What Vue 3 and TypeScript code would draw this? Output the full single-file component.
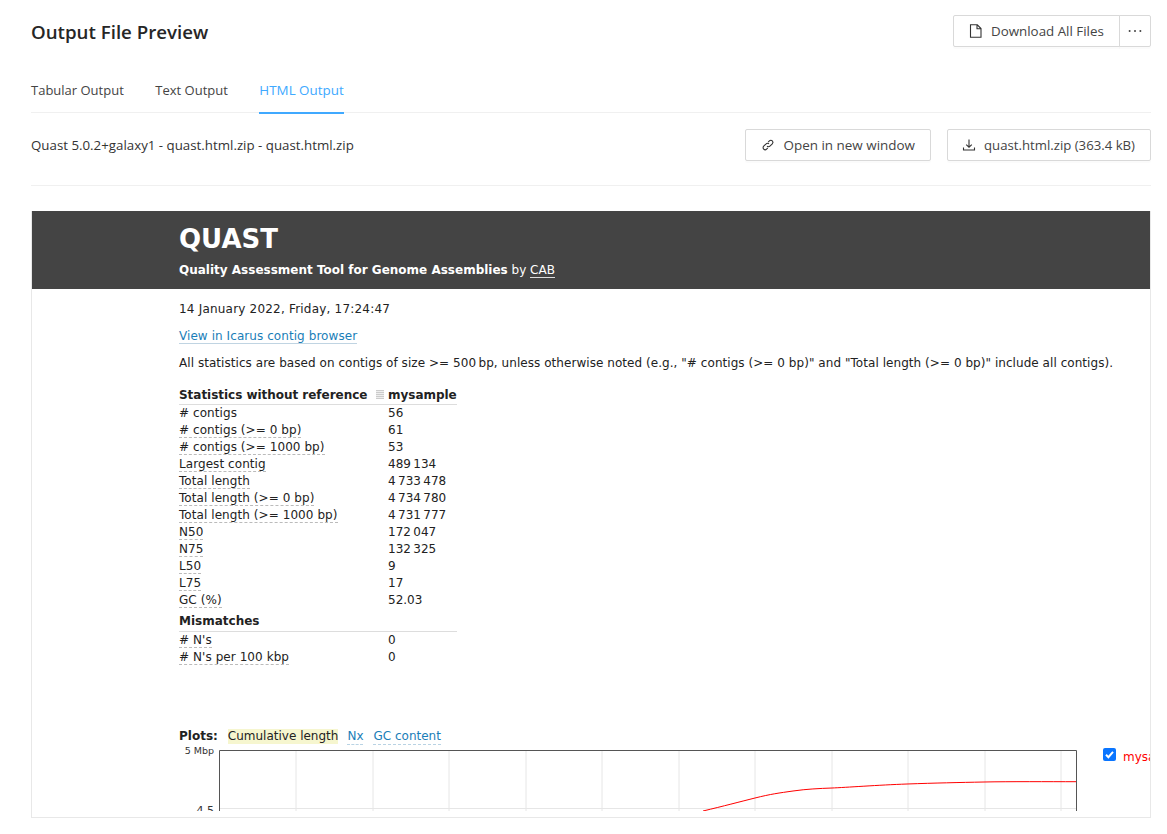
<script setup lang="ts">
interface Metric { label: string; value: string; dashed?: boolean }

const metrics: Metric[] = [
  { label: '# contigs', value: '56' },
  { label: '# contigs (>= 0 bp)', value: '61', dashed: true },
  { label: '# contigs (>= 1000 bp)', value: '53', dashed: true },
  { label: 'Largest contig', value: '489\u2009134', dashed: true },
  { label: 'Total length', value: '4\u2009733\u2009478', dashed: true },
  { label: 'Total length (>= 0 bp)', value: '4\u2009734\u2009780', dashed: true },
  { label: 'Total length (>= 1000 bp)', value: '4\u2009731\u2009777', dashed: true },
  { label: 'N50', value: '172\u2009047', dashed: true },
  { label: 'N75', value: '132\u2009325', dashed: true },
  { label: 'L50', value: '9', dashed: true },
  { label: 'L75', value: '17', dashed: true },
  { label: 'GC (%)', value: '52.03', dashed: true },
]
const mismatches: Metric[] = [
  { label: "# N's", value: '0', dashed: true },
  { label: "# N's per 100 kbp", value: '0', dashed: true },
]
const tabs = ['Tabular Output', 'Text Output', 'HTML Output']
const gridX = [77, 154, 230, 307, 383, 460, 536, 613, 689, 766, 842]
</script>

<template>
  <div class="page">
    <header class="head">
      <h1>Output File Preview</h1>
      <div class="btn-group">
        <button class="btn">
          <svg width="14" height="14" viewBox="0 0 14 14" fill="none" stroke="#333" stroke-width="1.1"><path d="M1.5.8h6.8l3.7 3.7v8.7H1.5zM8 .8v4h4" /></svg>
          Download All Files
        </button>
        <button class="btn more">
          <svg width="14" height="4" viewBox="0 0 14 4" fill="#444"><circle cx="1.6" cy="2" r="1" /><circle cx="7" cy="2" r="1" /><circle cx="12.4" cy="2" r="1" /></svg>
        </button>
      </div>
    </header>

    <nav class="tabs">
      <a v-for="(t, i) in tabs" :key="t" class="tab" :class="{ active: i === 2 }">{{ t }}</a>
    </nav>

    <div class="file-row">
      <span class="file-name">Quast 5.0.2+galaxy1 - quast.html.zip - quast.html.zip</span>
      <div class="file-actions">
        <button class="btn open">
          <svg width="14" height="14" viewBox="0 0 14 14" fill="none" stroke="#333" stroke-width="1.1"><path d="M6 8.2a2 2 0 0 0 2.9 0l2.4-2.4a2 2 0 0 0-2.9-2.9L7.2 4.1M8 5.8a2 2 0 0 0-2.9 0L2.7 8.2a2 2 0 0 0 2.9 2.9l1.2-1.2" /></svg>
          Open in new window
        </button>
        <button class="btn zip">
          <svg width="14" height="14" viewBox="0 0 14 14" fill="none" stroke="#333" stroke-width="1.1"><path d="M7 1.5v7.5M4.2 6.6 7 9.2l2.8-2.6M1.5 9.5v2.5h11V9.5" /></svg>
          quast.html.zip (363.4 kB)
        </button>
      </div>
    </div>

    <section class="frame">
      <div class="report">
        <div class="banner">
          <div class="inner">
            <div class="logo">QUAST</div>
            <div class="subtitle"><b>Quality Assessment Tool for Genome Assemblies</b> by <span class="cab">CAB</span></div>
          </div>
        </div>

        <div class="inner body-text">
          <p class="date">14 January 2022, Friday, 17:24:47</p>
          <p class="icarus"><a>View in Icarus contig browser</a></p>
          <p class="note">All statistics are based on contigs of size &gt;= 500&#8201;bp, unless otherwise noted (e.g., "# contigs (&gt;= 0 bp)" and "Total length (&gt;= 0 bp)" include all contigs).</p>

          <table class="stats">
            <thead>
              <tr>
                <th class="c1">Statistics without reference <i class="drag"></i></th>
                <th>mysample</th>
              </tr>
            </thead>
            <tbody>
              <tr v-for="m in metrics" :key="m.label">
                <td><span class="label" :class="{ dash: m.dashed }">{{ m.label }}</span></td>
                <td>{{ m.value }}</td>
              </tr>
              <tr class="group"><td colspan="2">Mismatches</td></tr>
              <tr v-for="m in mismatches" :key="m.label">
                <td><span class="label dash">{{ m.label }}</span></td>
                <td>{{ m.value }}</td>
              </tr>
            </tbody>
          </table>

          <div class="plots-nav">
            <b>Plots:</b>
            <span class="sel">Cumulative length</span>
            <a>Nx</a>
            <a>GC content</a>
          </div>

          <div class="plot">
            <svg class="chart" width="900" height="64" viewBox="0 0 900 64">
              <text x="35" y="4" text-anchor="end" class="tick">5 Mbp</text>
              <text x="35" y="64" text-anchor="end" class="tick big">4.5</text>
              <line v-for="x in gridX" :key="x" :x1="x + 40" y1="0" :x2="x + 40" y2="64" stroke="#e6e6e6" />
              <line x1="40" y1="58.5" x2="898" y2="58.5" stroke="#e6e6e6" />
              <path d="M40.5 64V.5H897.5V64" fill="none" stroke="#555" />
              <path d="M524 61C545 56 560 52 576 48S600 43 614 41 640 38.500 653 38 700 35 728 34 780 32.500 805 32 870 31.700 897 31.700" fill="none" stroke="#f00" stroke-width="1" />
            </svg>
            <label class="legend">
              <span class="check">
                <svg width="13" height="13" viewBox="0 0 13 13"><path d="M3 6.800 5.400 9.200 10 3.800" fill="none" stroke="#fff" stroke-width="2" /></svg>
              </span>
              <span class="legend-name">mysample</span>
            </label>
          </div>
        </div>
      </div>
    </section>
  </div>
</template>

<style>
html, body { background: #fff; overflow: hidden; }
</style>

<style scoped>
.page {
  width: 1120px;
  height: 834px;
  padding-left: 31px;
  box-sizing: content-box;
  font-family: "Open Sans", "Noto Sans", sans-serif;
  font-size: 13px;
  color: #333;
  overflow: hidden;
}
.head {
  height: 64px;
  box-sizing: border-box;
  padding-top: 15px;
  display: flex;
  justify-content: space-between;
  align-items: flex-start;
}
h1 {
  margin: 0;
  font-size: 18.7px;
  line-height: 34px;
  font-weight: 600;
  color: #262626;
}
.btn-group { display: flex; }
.btn {
  height: 32px;
  padding: 0 15px;
  display: inline-flex;
  align-items: center;
  gap: 8px;
  background: #fff;
  border: 1px solid #d9d9d9;
  border-radius: 2px;
  font-family: inherit;
  font-size: 13.35px;
  color: #444;
  box-shadow: 0 2px 0 rgba(0, 0, 0, 0.015);
}
.btn.open { font-size: 13.45px; }
.btn.zip { font-size: 13.2px; padding-left: 14px; }
.btn-group .btn:first-child { border-radius: 2px 0 0 2px; width: 167px; }
.more {
  margin-left: -1px;
  width: 32px;
  padding: 0;
  justify-content: center;
  border-radius: 0 2px 2px 0;
}
.tabs {
  display: flex;
  gap: 31.5px;
  height: 48px;
  border-bottom: 1px solid #f0f0f0;
}
.tab {
  padding-top: 17px;
  height: 31px;
  line-height: 18px;
  color: #444;
}
.tab.active {
  color: #40a9ff;
  border-bottom: 2px solid #40a9ff;
  font-size: 13.4px;
}
.file-row {
  height: 73px;
  padding-top: 16px;
  display: flex;
  justify-content: space-between;
  align-items: flex-start;
  border-bottom: 1px solid #f0f0f0;
  box-sizing: border-box;
}
.file-name { font-size: 13.3px; line-height: 32px; }
.file-actions { display: flex; gap: 16px; }
.frame {
  margin-top: 25px;
  height: 607px;
  box-sizing: border-box;
  border: 1px solid #e8e8e8;
  border-top: 0;
  padding-bottom: 6px;
}
.report {
  height: 100%;
  overflow: hidden;
  font-family: "DejaVu Sans", Verdana, sans-serif;
  font-size: 12px;
  color: #222;
}
.banner {
  height: 78px;
  box-sizing: border-box;
  background: #444;
  color: #fff;
  overflow: hidden;
}
.inner { padding-left: 147px; }
.logo {
  font-size: 26px;
  font-weight: 700;
  line-height: 30px;
  padding-top: 13px;
}
.subtitle {
  font-size: 12px;
  line-height: 16px;
  margin-top: 8px;
}
.cab { border-bottom: 1px solid #ddd; }
p { margin: 0; }
.date { padding-top: 12px; line-height: 16px; letter-spacing: 0.2px; }
.icarus { margin-top: 11px; line-height: 16px; }
.icarus a { color: #1a7eb8; border-bottom: 1px solid #c0d4e2; letter-spacing: 0.07px; }
.note { margin-top: 11px; line-height: 16px; white-space: nowrap; letter-spacing: 0.05px; }
.stats {
  margin-top: 15px;
  border-collapse: collapse;
  font-size: 12px;
}
.stats th {
  text-align: left;
  font-weight: 700;
  height: 18px;
  padding: 0;
  line-height: 15px;
  letter-spacing: -0.03px;
  border-bottom: 1px solid #ddd;
}
.c1 { width: 209px; }
.stats td { height: 17px; padding: 0; line-height: 15px; }
.label { letter-spacing: 0.07px; }
.stats tr.group td {
  height: 22px;
  padding-top: 3px;
  box-sizing: border-box;
  font-weight: 700;
  line-height: 17px;
  border-bottom: 1px solid #ddd;
}
.dash { border-bottom: 1px dashed #bbb; }
.drag {
  display: inline-block;
  width: 8px;
  height: 9px;
  margin-left: 4px;
  background: repeating-linear-gradient(#ccc 0 1px, #eee 1px 2px);
}
.plots-nav {
  margin-top: 63px;
  display: flex;
  gap: 10px;
  line-height: 15px;
  height: 15px;
}
.plots-nav a { color: #1a7eb8; border-bottom: 1px dashed #b9d3e4; height: 15px; }
.sel { background: #f6f6cf; margin-right: -1px; }
.plot { position: relative; margin-top: 6px; }
.chart { display: block; overflow: visible; }
.tick { font-size: 9.5px; fill: #333; }
.tick.big { font-size: 11px; }
.legend {
  position: absolute;
  left: 924px;
  top: -2px;
  display: flex;
  align-items: flex-start;
  gap: 7px;
  color: #f00;
  white-space: nowrap;
}
.legend-name { margin-top: 2px; line-height: 15px; }
.check {
  width: 13px;
  height: 13px;
  background: #0a75ff;
  border-radius: 2px;
  display: block;
}
.check svg { display: block; }
</style>
